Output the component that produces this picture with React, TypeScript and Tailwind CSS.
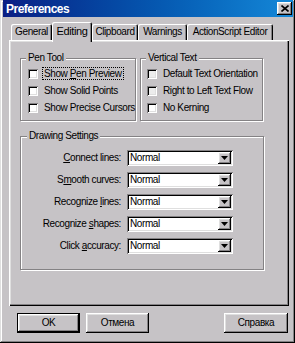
import type { ReactNode } from "react";

const RAISED =
  "shadow-[inset_-1px_-1px_#000,inset_1px_1px_#fff,inset_-2px_-2px_#848284,inset_2px_2px_#dfdfdf]";
const SUNKEN =
  "shadow-[inset_1px_1px_#848284,inset_-1px_-1px_#fff,inset_2px_2px_#000,inset_-2px_-2px_#dfdfdf]";
const GROUP = "border border-[#848284] shadow-[1px_1px_#fff,inset_1px_1px_#fff]";

function Checkbox({ label, dim }: { label: ReactNode; dim?: boolean }) {
  return (
    <div className="h-[17px] flex items-center gap-[6px]">
      <span className={`w-[10px] h-[10px] shrink-0 ${SUNKEN} ${dim ? "bg-[#ececec]" : "bg-white"}`} />
      <span className="whitespace-nowrap">{label}</span>
    </div>
  );
}

function Select({ label }: { label: ReactNode }) {
  return (
    <div className="h-[22px] flex items-center">
      <span className="w-[101px] pr-[1px] text-right whitespace-nowrap">{label}</span>
      <div className={`ml-[5px] w-[106px] h-[16px] bg-white flex items-center pl-[3px] pr-[2px] ${SUNKEN}`}>
        <span className="flex-1">Normal</span>
        <span className={`w-[13px] h-[12px] bg-[#c6c3c6] flex items-center justify-center ${RAISED}`}>
          <svg width="7" height="4" viewBox="0 0 7 4">
            <path d="M0 0h7L3.5 4z" fill="#000" />
          </svg>
        </span>
      </div>
    </div>
  );
}

function Tab({ label, w, active }: { label: string; w: string; active?: boolean }) {
  return (
    <div
      className={`${w} ${
        active ? "h-[20px] -mb-[2px] relative z-10 pb-[3px]" : "h-[16px]"
      } bg-[#c6c3c6] rounded-t-[2px] flex items-center justify-center whitespace-nowrap shadow-[inset_1px_1px_#fff,inset_-1px_0_#000,inset_-2px_0_#848284]`}
    >
      <span className={active ? "text-[11px]" : ""}>{label}</span>
    </div>
  );
}

function Button({ children, w, def }: { children: ReactNode; w: string; def?: boolean }) {
  return (
    <div className={`${w} h-[20px] ${def ? "border border-black" : ""}`}>
      <div className={`w-full h-full bg-[#c6c3c6] flex items-center justify-center ${RAISED}`}>{children}</div>
    </div>
  );
}

export default function App() {
  return (
    <div className="w-[295px] h-[343px] bg-[#c6c3c6] flex flex-col pl-[3px] pr-[2px] shadow-[inset_-1px_-1px_#000,inset_1px_1px_#dfdfdf,inset_-2px_-2px_#848284,inset_2px_2px_#fff] font-['Liberation_Sans',Arial,sans-serif] text-[10px] tracking-[-0.4px] text-black leading-[12px]">
      <div className="h-[17px] flex items-center justify-between bg-gradient-to-r from-[#0a1e84] to-[#1588d8] pl-[3px] pr-[1px]">
        <span className="text-white font-bold text-[12px] tracking-[-0.5px]">Preferences</span>
        <div className={`w-[15px] h-[13px] bg-[#c6c3c6] flex items-center justify-center ${RAISED}`}>
          <svg width="8" height="7" viewBox="0 0 8 7">
            <path d="M0.5 0.5L7.5 6.5M7.5 0.5L0.5 6.5" stroke="#000" strokeWidth="1.6" />
          </svg>
        </div>
      </div>

      <div className="ml-[6px] mr-[4px] mt-[5px]">
        <div className="h-[18px] flex items-end pl-[2px]">
          <Tab label="General" w="w-[41px]" />
          <Tab label="Editing" w="w-[40px]" active />
          <Tab label="Clipboard" w="w-[46px]" />
          <Tab label="Warnings" w="w-[49px]" />
          <Tab label="ActionScript Editor" w="w-[86px]" />
        </div>

        <div className="h-[266px] pl-[11px] pt-[12px] shadow-[inset_1px_1px_#fff,inset_-1px_-1px_#000,inset_-2px_-2px_#848284,inset_2px_2px_#dfdfdf]">
          <div className="flex gap-[4px]">
            <fieldset className={`w-[116px] h-[69px] ${GROUP}`}>
              <legend className="ml-[5px] px-[2px] bg-[#c6c3c6]">Pen Tool</legend>
              <div className="pl-[7px] pt-[1px]">
                <Checkbox
                  label={
                    <span className="outline-1 outline-dotted outline-black px-[1px] -ml-[1px]">
                      Show <u>P</u>en Preview
                    </span>
                  }
                />
                <Checkbox label="Show Solid Points" />
                <Checkbox label="Show Precise Cursors" />
              </div>
            </fieldset>
            <fieldset className={`w-[123px] h-[69px] ${GROUP}`}>
              <legend className="ml-[5px] px-[2px] bg-[#c6c3c6]">Vertical Text</legend>
              <div className="pl-[6px] pt-[1px]">
                <Checkbox label="Default Text Orientation" dim />
                <Checkbox label="Right to Left Text Flow" dim />
                <Checkbox label="No Kerning" />
              </div>
            </fieldset>
          </div>

          <fieldset className={`mt-[9px] w-[244px] h-[140px] ${GROUP}`}>
            <legend className="ml-[6px] px-[2px] bg-[#c6c3c6]">Drawing Settings</legend>
            <div className="pt-[5px]">
              <Select label={<><u>C</u>onnect lines:</>} />
              <Select label={<>S<u>m</u>ooth curves:</>} />
              <Select label={<>Recognize <u>l</u>ines:</>} />
              <Select label={<>Recognize <u>s</u>hapes:</>} />
              <Select label={<>Click <u>a</u>ccuracy:</>} />
            </div>
          </fieldset>
        </div>
      </div>

      <div className="mt-[7px] flex pl-[14px] pr-[5px]">
        <Button w="w-[63px]" def>
          OK
        </Button>
        <div className="w-[6px]" />
        <Button w="w-[63px]">Отмена</Button>
        <div className="flex-1" />
        <Button w="w-[64px]">Справка</Button>
      </div>
    </div>
  );
}
